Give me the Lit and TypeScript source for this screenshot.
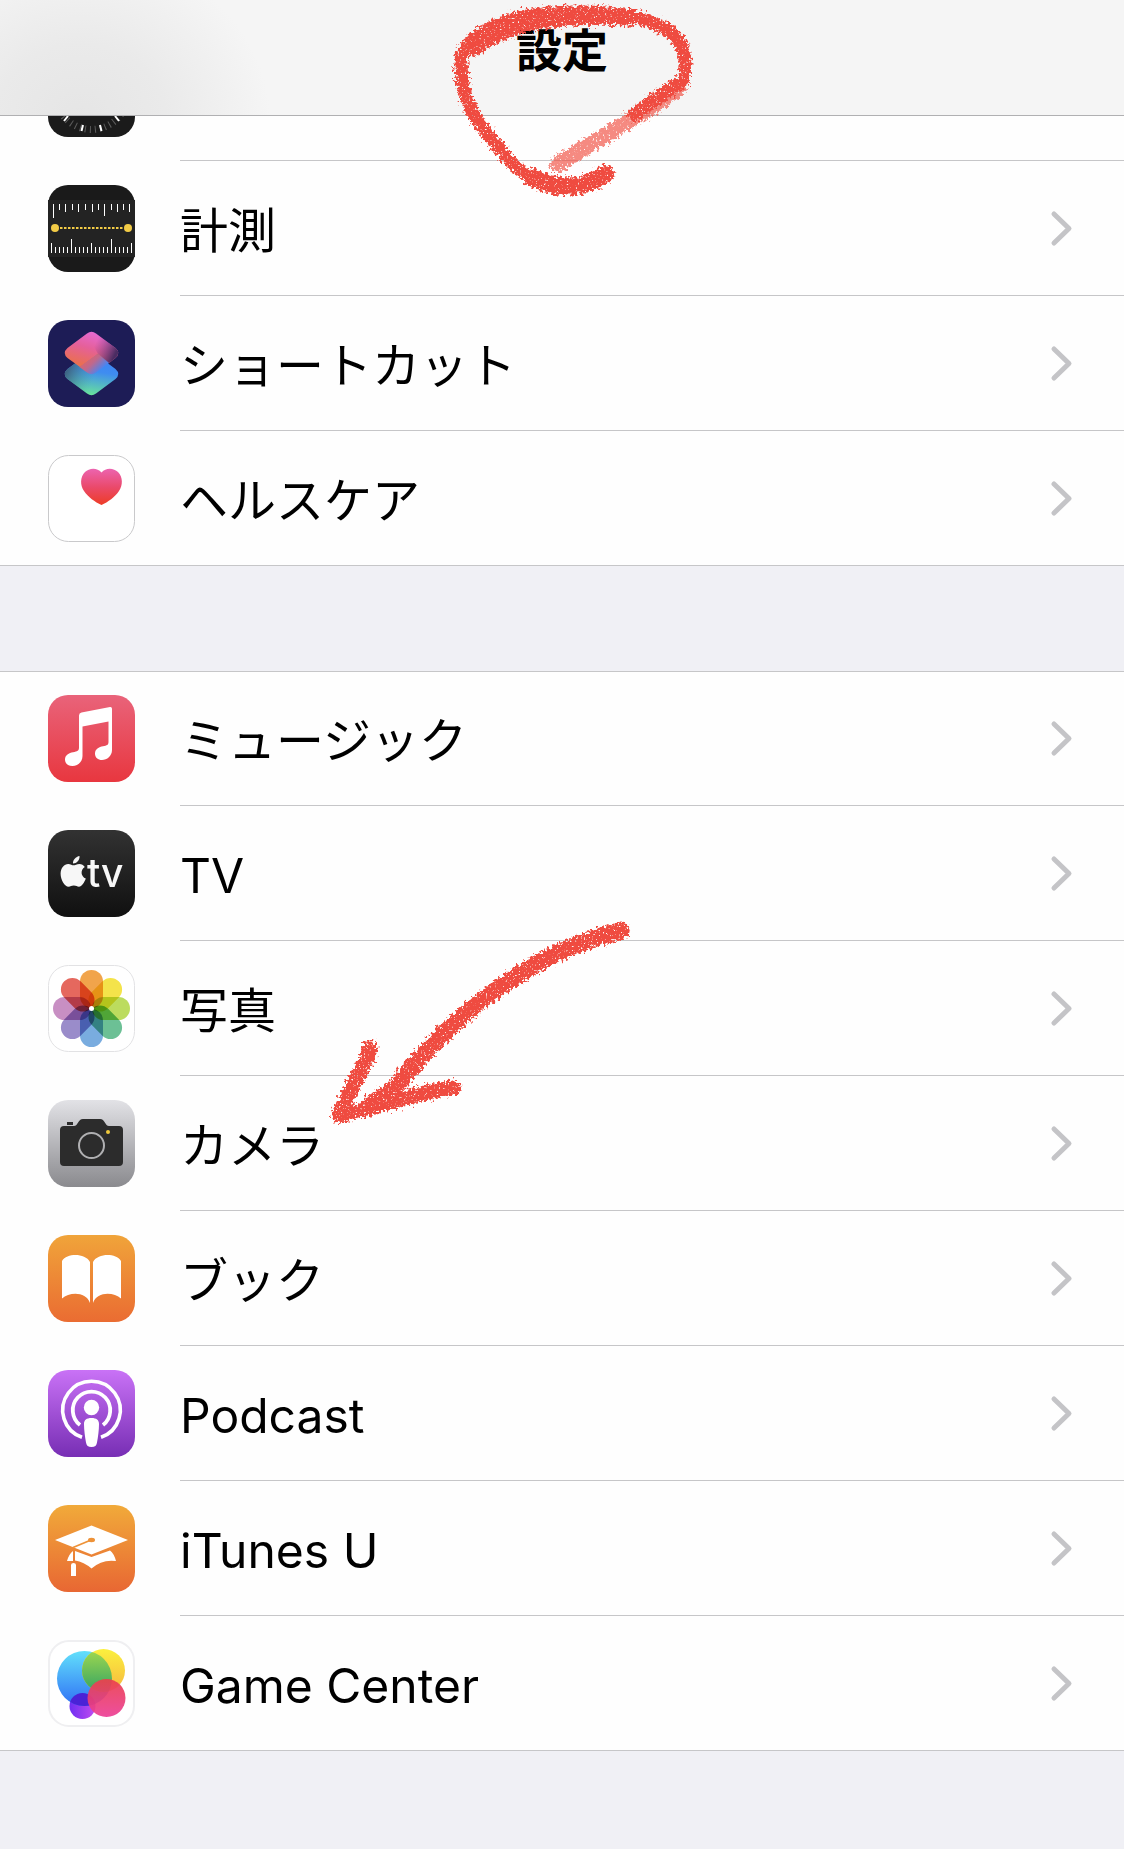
import { css, html, svg, LitElement } from 'lit';
import { customElement, property } from 'lit/decorators.js';
import { classMap } from 'lit/directives/class-map.js';

const compass = svg`
    <rect width="87" height="87" rx="20" fill="#1b1b1b"/>
    <circle cx="43.5" cy="43.5" r="36" fill="none" stroke="#5c5c5c" stroke-width="7" pathLength="360" stroke-dasharray="1.6 6.4" stroke-dashoffset="-3"/>
    <path d="M35 75l-1.500 6M52 75l1.500 6M20 66l-4 5M67 66l4 5" stroke="#fff" stroke-width="2"/>
`;

const measure = svg`
    <rect width="87" height="87" rx="20" fill="#1a1a1a"/>
    <path d="M0 15h87v57H0z" fill="#232323"/>
    <path d="M5.5 19v14M56.5 19v12M11.5 19v6M17.5 19v8M24.5 19v6M30.5 19v8M37.5 19v6M44.5 19v8M50.5 19v6M63.5 19v6M69.5 19v8M75.5 19v6M81.5 19v8" stroke="#fff"/>
    <path d="M3.5 58v10M23.5 54v14M43.5 58v10M63.5 54v14M83.5 58v10M7.5 62v6M11.5 62v6M15.5 62v6M19.5 62v6M27.5 62v6M31.5 62v6M35.5 62v6M39.5 62v6M47.5 62v6M51.5 62v6M55.5 62v6M59.5 62v6M67.5 62v6M71.5 62v6M75.5 62v6M79.5 62v6" stroke="#fff"/>
    <path d="M12 43h64" stroke="#f2cb46" stroke-width="2" stroke-dasharray="2.5 1.5"/>
    <circle cx="7" cy="43" r="4" fill="#f2cb46"/>
    <circle cx="80" cy="43" r="4" fill="#f2cb46"/>
`;

const shortcuts = svg`
    <defs>
        <linearGradient id="low" x1="0.5" y1="1" x2="0.7" y2="0">
            <stop offset="0" stop-color="#69e39a"/>
            <stop offset="0.55" stop-color="#3f8df0"/>
            <stop offset="1" stop-color="#3b7ff8"/>
        </linearGradient>
        <linearGradient id="lowShade" x1="0" y1="0.4" x2="0.55" y2="0.6">
            <stop offset="0" stop-color="#3c5a78"/>
            <stop offset="1" stop-color="#4aa0a8" stop-opacity="0"/>
        </linearGradient>
        <linearGradient id="high" x1="0.65" y1="0" x2="0.25" y2="0.9">
            <stop offset="0" stop-color="#e56bd9"/>
            <stop offset="0.5" stop-color="#e5609a"/>
            <stop offset="1" stop-color="#ea6f52"/>
        </linearGradient>
        <linearGradient id="highShade" x1="0.3" y1="0.3" x2="0.95" y2="0.6">
            <stop offset="0" stop-color="#8a4590" stop-opacity="0"/>
            <stop offset="1" stop-color="#4a2c62"/>
        </linearGradient>
        <linearGradient id="fold" x1="0.1" y1="0.2" x2="0.8" y2="0.7">
            <stop offset="0" stop-color="#e8645c"/>
            <stop offset="0.5" stop-color="#c0688c"/>
            <stop offset="1" stop-color="#4a84f0"/>
        </linearGradient>
    </defs>
    <rect width="87" height="87" rx="20" fill="#1d1c56"/>
    <path d="M39 34.5q4.500-3.500 9 0l19.500 14.500q5.500 5 0 10L48 73.500q-4.500 3.500-9 0L19.500 59q-5.500-5 0-10z" fill="url(#low)"/>
    <path d="M39 34.5q4.500-3.500 9 0l19.500 14.500q5.500 5 0 10L48 73.500q-4.500 3.500-9 0L19.500 59q-5.500-5 0-10z" fill="url(#lowShade)"/>
    <path d="M39 13.500q4.500-3.500 9 0l19.500 14.500q5.500 5 0 10L61 43 50 34 32 47 19.500 38q-5.500-5 0-10z" fill="url(#high)"/>
    <path d="M39 13.500q4.500-3.500 9 0l19.500 14.500q5.500 5 0 10L61 43 50 34z" fill="url(#highShade)"/>
    <path d="M31.500 47L50 33.500l11 9.500-13 9.500q-4.500 3.500-9 0z" fill="url(#fold)"/>
`;

const health = svg`
    <defs>
        <linearGradient id="heart" x1="0" y1="0" x2="0" y2="1">
            <stop offset="0" stop-color="#ec64b0"/>
            <stop offset="0.5" stop-color="#ea4a6c"/>
            <stop offset="1" stop-color="#ee3c26"/>
        </linearGradient>
    </defs>
    <rect x="0.5" y="0.5" width="86" height="86" rx="20" fill="#fff" stroke="#c9c9cb"/>
    <path d="M53.500 17.500C58 12 66 13 70 17c5 5 5 13 1 19-4 6-11 11-17.500 14C47 47 40 42 36 36c-4-6-4-14 1-19 4-4 12-5 16.500.5z" fill="url(#heart)"/>
`;

const music = svg`
    <defs>
        <linearGradient id="red" x1="0" y1="0" x2="0" y2="1">
            <stop offset="0" stop-color="#e9637a"/>
            <stop offset="1" stop-color="#e8373f"/>
        </linearGradient>
    </defs>
    <rect width="87" height="87" rx="20" fill="url(#red)"/>
    <path d="M33.500 17.500L62 12q2-.3 2 1.700V55c0 6-5 10-10 10-4 0-7-2.500-7-6.300 0-4.700 4-6.700 8-7.400 4-.7 5.500-1.300 5.500-4.500V26.500L34.500 31.500V61c0 6-5 10-10 10-4.500 0-7.500-2.500-7.500-6.500 0-4.500 4-6.500 8-7.200 4.500-.8 6-1.500 6-5V20.500q0-2.500 2.500-3z" fill="#fff"/>
`;

const tv = svg`
    <defs>
        <linearGradient id="black" x1="0" y1="0" x2="0" y2="1">
            <stop offset="0" stop-color="#323232"/>
            <stop offset="1" stop-color="#101010"/>
        </linearGradient>
    </defs>
    <rect width="87" height="87" rx="20" fill="url(#black)"/>
    <g fill="#f7f7f7">
        <path d="M31.500 26c.5 4-3 7.500-6.500 7.500-.5-3.500 3-7 6.500-7.500z"/>
        <path d="M25.500 35.300c1.500 0 3.300-1.400 6-1.400 2 0 4 1 5.300 3-4.800 3-4 9.600 1 11.600-1.300 3.700-4 8.200-6.800 8.200-2 0-2.700-1.200-5.200-1.200s-3.200 1.200-5.200 1.200c-4 0-8-7-8-13 0-6 3.800-9.800 7.600-9.800 2.300 0 4 1.400 5.300 1.400z"/>
        <text class="tv" x="39" y="57">tv</text>
    </g>
`;

const petals = ['#f09a37', '#f3e036', '#b5d84c', '#5cb98a', '#6aa3dc', '#8f7fc4', '#c283bd', '#e2574c'];

const photos = svg`
    <rect x="0.5" y="0.5" width="86" height="86" rx="20" fill="#fff" stroke="#e2e2e4"/>
    ${petals.map((color, i) => svg`
        <rect class="petal" x="32" y="5" width="23" height="38" rx="11.5" fill=${color} transform="rotate(${i * 45} 43.5 43.5)"/>
    `)}
    <circle cx="43.5" cy="43.5" r="2.5" fill="#fff"/>
`;

const camera = svg`
    <defs>
        <linearGradient id="silver" x1="0" y1="0" x2="0" y2="1">
            <stop offset="0" stop-color="#e2e2e6"/>
            <stop offset="1" stop-color="#8a8a8e"/>
        </linearGradient>
    </defs>
    <rect width="87" height="87" rx="20" fill="url(#silver)"/>
    <path d="M19 22h6v3h-6z" fill="#2c2c2c"/>
    <path d="M16 26h10c4 0 4-7 9-7h17c5 0 5 7 9 7h10q4 0 4 4v32q0 4-4 4H16q-4 0-4-4V30q0-4 4-4z" fill="#2c2c2c"/>
    <circle cx="43.5" cy="45.5" r="12.5" fill="none" stroke="#b0b0b2" stroke-width="2"/>
    <circle cx="60" cy="32" r="2" fill="#f0c93c"/>
`;

const books = svg`
    <defs>
        <linearGradient id="orange" x1="0" y1="0" x2="0" y2="1">
            <stop offset="0" stop-color="#f0a43a"/>
            <stop offset="1" stop-color="#ea6c32"/>
        </linearGradient>
    </defs>
    <rect width="87" height="87" rx="20" fill="url(#orange)"/>
    <path d="M14 26c5-8 23-8 28 1v41c-4-12-21-11-28-4.500zM73 26c-5-8-23-8-28 1v41c4-12 21-11 28-4.500z" fill="#fff"/>
`;

const podcast = svg`
    <defs>
        <linearGradient id="purple" x1="0" y1="0" x2="0" y2="1">
            <stop offset="0" stop-color="#c972f6"/>
            <stop offset="1" stop-color="#772eb4"/>
        </linearGradient>
    </defs>
    <rect width="87" height="87" rx="20" fill="url(#purple)"/>
    <g fill="none" stroke="#fff">
        <path d="M34 67.300A28.800 28.800 0 1 1 53 67.300" stroke-width="3.600"/>
        <path d="M32 55A18.700 18.700 0 1 1 55 55" stroke-width="3.800"/>
    </g>
    <circle cx="43.5" cy="37.5" r="7.7" fill="#fff"/>
    <path d="M43.500 48c5 0 7.500 2 7.500 6 0 6-1 13-2 18.500-.5 3-2 4.500-5.500 4.500s-5-1.500-5.500-4.500C37 67 36 60 36 54c0-4 2.500-6 7.500-6z" fill="#fff"/>
`;

const itunesU = svg`
    <defs>
        <linearGradient id="amber" x1="0" y1="0" x2="0" y2="1">
            <stop offset="0" stop-color="#f1aa3a"/>
            <stop offset="1" stop-color="#e86733"/>
        </linearGradient>
    </defs>
    <rect width="87" height="87" rx="20" fill="url(#amber)"/>
    <path d="M43.500 20.500L80 35 43.500 49.500 7 35z" fill="#fff"/>
    <path d="M27 46l16.500 6L62 45.500q4 3 6 10.500-14-2-24.500 7.500Q36 57 27 55.500zM25 46v10h-6q2-7 6-10z" fill="#fff"/>
    <path d="M23 60q0-2 2.500-2t2.500 2v11h-5z" fill="#fff"/>
    <path d="M43 35L25 42.500" stroke="#ee9238" stroke-width="1.800"/>
    <ellipse cx="43.5" cy="35" rx="3.5" ry="2.2" fill="#ee9238"/>
`;

const gameCenter = svg`
    <defs>
        <linearGradient id="sky" x1="0" y1="0" x2="0" y2="1">
            <stop offset="0" stop-color="#62e0fb"/>
            <stop offset="1" stop-color="#2f6ff5"/>
        </linearGradient>
        <linearGradient id="sun" x1="0" y1="0" x2="0" y2="1">
            <stop offset="0" stop-color="#fbf03e"/>
            <stop offset="1" stop-color="#f6b63f"/>
        </linearGradient>
        <linearGradient id="leaf" x1="0" y1="0" x2="0" y2="1">
            <stop offset="0" stop-color="#a3d94e"/>
            <stop offset="1" stop-color="#35a463"/>
        </linearGradient>
        <linearGradient id="violet" x1="0" y1="0" x2="1" y2="0">
            <stop offset="0" stop-color="#6f2ef2"/>
            <stop offset="1" stop-color="#c14df0"/>
        </linearGradient>
        <linearGradient id="rose" x1="0" y1="0" x2="0" y2="1">
            <stop offset="0" stop-color="#ea3f4c"/>
            <stop offset="1" stop-color="#ec3f97"/>
        </linearGradient>
        <clipPath id="inSky"><circle cx="36.5" cy="38.5" r="27.5"/></clipPath>
    </defs>
    <rect x="1" y="1" width="85" height="85" rx="20" fill="#fff" stroke="#efeff1" stroke-width="2"/>
    <circle cx="34.5" cy="66" r="13" fill="url(#violet)"/>
    <circle cx="36.5" cy="38.5" r="27.5" fill="url(#sky)"/>
    <circle cx="55.5" cy="30.5" r="21.5" fill="url(#sun)"/>
    <g clip-path="url(#inSky)">
        <circle cx="55.5" cy="30.5" r="21.5" fill="url(#leaf)"/>
        <circle cx="34.5" cy="66" r="13" fill="#4a22d6"/>
    </g>
    <circle cx="58.5" cy="58" r="19" fill="url(#rose)" fill-opacity="0.92"/>
`;

interface Entry {
    label: string;
    icon: unknown;
    clipped?: boolean;
}

const utilities: Entry[] = [
    { label: '', icon: compass, clipped: true },
    { label: '計測', icon: measure },
    { label: 'ショートカット', icon: shortcuts },
    { label: 'ヘルスケア', icon: health },
];

const media: Entry[] = [
    { label: 'ミュージック', icon: music },
    { label: 'TV', icon: tv },
    { label: '写真', icon: photos },
    { label: 'カメラ', icon: camera },
    { label: 'ブック', icon: books },
    { label: 'Podcast', icon: podcast },
    { label: 'iTunes U', icon: itunesU },
    { label: 'Game Center', icon: gameCenter },
];

// Waxy edge and paper grain shared by the hand-drawn marks
const crayon = svg`
    <filter id="crayon" filterUnits="userSpaceOnUse" x="0" y="0" width="340" height="240">
        <feTurbulence type="fractalNoise" baseFrequency="0.35" numOctaves="2" seed="4" result="rough"/>
        <feDisplacementMap in="SourceGraphic" in2="rough" scale="12" xChannelSelector="R" yChannelSelector="G" result="edge"/>
        <feTurbulence type="fractalNoise" baseFrequency="0.55" numOctaves="2" seed="9"/>
        <feColorMatrix type="matrix" values="0 0 0 0 0  0 0 0 0 0  0 0 0 0 0  0 0 0 -6 4.8" result="grain"/>
        <feComposite in="edge" in2="grain" operator="in"/>
    </filter>
`;

@customElement('settings-row')
export class SettingsRow extends LitElement {
    static styles = css`
        :host {
            display: block;
        }

        .row {
            box-sizing: border-box;
            display: flex;
            width: 100%;
            height: 135px;
            padding: 0 0 0 48px;
            border: 0;
            background: none;
            color: #000;
            font-family: Inter, "Noto Sans CJK JP", sans-serif;
            text-align: left;
        }

        .icon {
            display: block;
            flex: none;
            width: 87px;
            height: 87px;
            margin: 24px 45px 24px 0;
        }

        .body {
            display: flex;
            flex: 1;
            align-items: center;
            justify-content: space-between;
            padding-right: 50px;
            border-bottom: 1px solid #c6c6c8;
        }

        .label {
            padding-top: 6px;
            font-size: 48px;
            line-height: 60px;
        }

        .chevron {
            width: 24px;
            height: 37px;
            fill: none;
            stroke: #c4c4c7;
            stroke-width: 5;
            stroke-linecap: round;
            stroke-linejoin: round;
        }

        .last .body {
            border-bottom-color: transparent;
        }

        .clipped {
            height: 45px;
            align-items: flex-end;
            overflow: hidden;
        }

        .clipped .body {
            align-self: stretch;
        }

        .clipped .chevron {
            display: none;
        }

        .petal {
            mix-blend-mode: multiply;
            opacity: 0.9;
        }

        .tv {
            font: 500 39px Inter, sans-serif;
        }
    `;

    @property({ attribute: false }) entry!: Entry;
    @property({ type: Boolean }) last = false;

    render() {
        const { label, icon, clipped = false } = this.entry;
        return html`
            <button class=${classMap({ row: true, last: this.last, clipped })}>
                <svg class="icon" viewBox="0 0 87 87" aria-hidden="true">${icon}</svg>
                <span class="body">
                    <span class="label">${label}</span>
                    <svg class="chevron" viewBox="0 0 24 37" aria-hidden="true"><path d="M4 4l15 14.500L4 33"/></svg>
                </span>
            </button>
        `;
    }
}

@customElement('app-root')
export class AppRoot extends LitElement {
    static styles = css`
        :host {
            display: block;
            min-height: 100vh;
            background: #f0f0f5;
        }

        .bar {
            position: relative;
            z-index: 1;
            display: flex;
            justify-content: center;
            box-sizing: border-box;
            height: 116px;
            padding-top: 15px;
            border-bottom: 1px solid #b0b0b2;
            background: radial-gradient(ellipse 190px 170px at 80px 120px, #e5e5e5, #eaeaea 45%, #f5f5f5) #f5f5f5;
        }

        .title {
            margin: 0;
            font: 700 46px/64px "Noto Sans CJK JP", sans-serif;
        }

        .group {
            position: relative;
            border-bottom: 1px solid #c6c6c8;
            background: #fefefe;
        }

        .group + .group {
            margin-top: 105px;
            box-shadow: inset 0 1px #c6c6c8;
        }

        .group settings-row:last-of-type {
            margin-bottom: -1px;
        }

        .mark {
            position: absolute;
            fill: none;
            stroke: #ef4b3f;
            stroke-linecap: round;
            stroke-linejoin: round;
            pointer-events: none;
        }

        .circle {
            top: 0;
            left: calc(50% - 122px);
            width: 260px;
            height: 210px;
        }

        .arrow {
            top: 239px;
            left: 310px;
            width: 340px;
            height: 220px;
        }
    `;

    renderGroup(entries: Entry[], mark: unknown = '') {
        return html`
            <section class="group">
                ${entries.map((entry, i) => html`
                    <settings-row .entry=${entry} ?last=${i === entries.length - 1}></settings-row>
                `)}
                ${mark}
            </section>
        `;
    }

    render() {
        return html`
            <header class="bar">
                <h1 class="title">設定</h1>
                <svg class="mark circle" viewBox="0 0 260 210" aria-hidden="true">
                    ${crayon}
                    <g filter="url(#crayon)">
                        <path d="M238 88C212 108 168 134 118 164" stroke-width="16" stroke-opacity="0.65"/>
                        <path d="M238 84L195 114" stroke-width="14"/>
                        <path d="M167 174C130 200 92 184 70 161C45 132 20 107 21 62C22 32 75 14 112 13C150 10 190 13 216 24C246 38 248 55 243 82" stroke-width="13"/>
                        <path d="M34 48C70 20 120 14 190 17" stroke-width="17"/>
                        <path d="M92 177C120 192 145 188 165 174" stroke-width="18"/>
                    </g>
                </svg>
            </header>
            <main>
                ${this.renderGroup(utilities)}
                ${this.renderGroup(media, html`
                    <svg class="mark arrow" viewBox="0 0 340 220" aria-hidden="true">
                        <g filter="url(#crayon)" stroke-width="17">
                            <path d="M311 21C220 42 140 107 83 180"/>
                            <path d="M60 138C54 160 38 182 29 205C62 200 108 181 144 178" stroke-width="15"/>
                            <path d="M83 180L62 193"/>
                        </g>
                    </svg>
                `)}
            </main>
        `;
    }
}
